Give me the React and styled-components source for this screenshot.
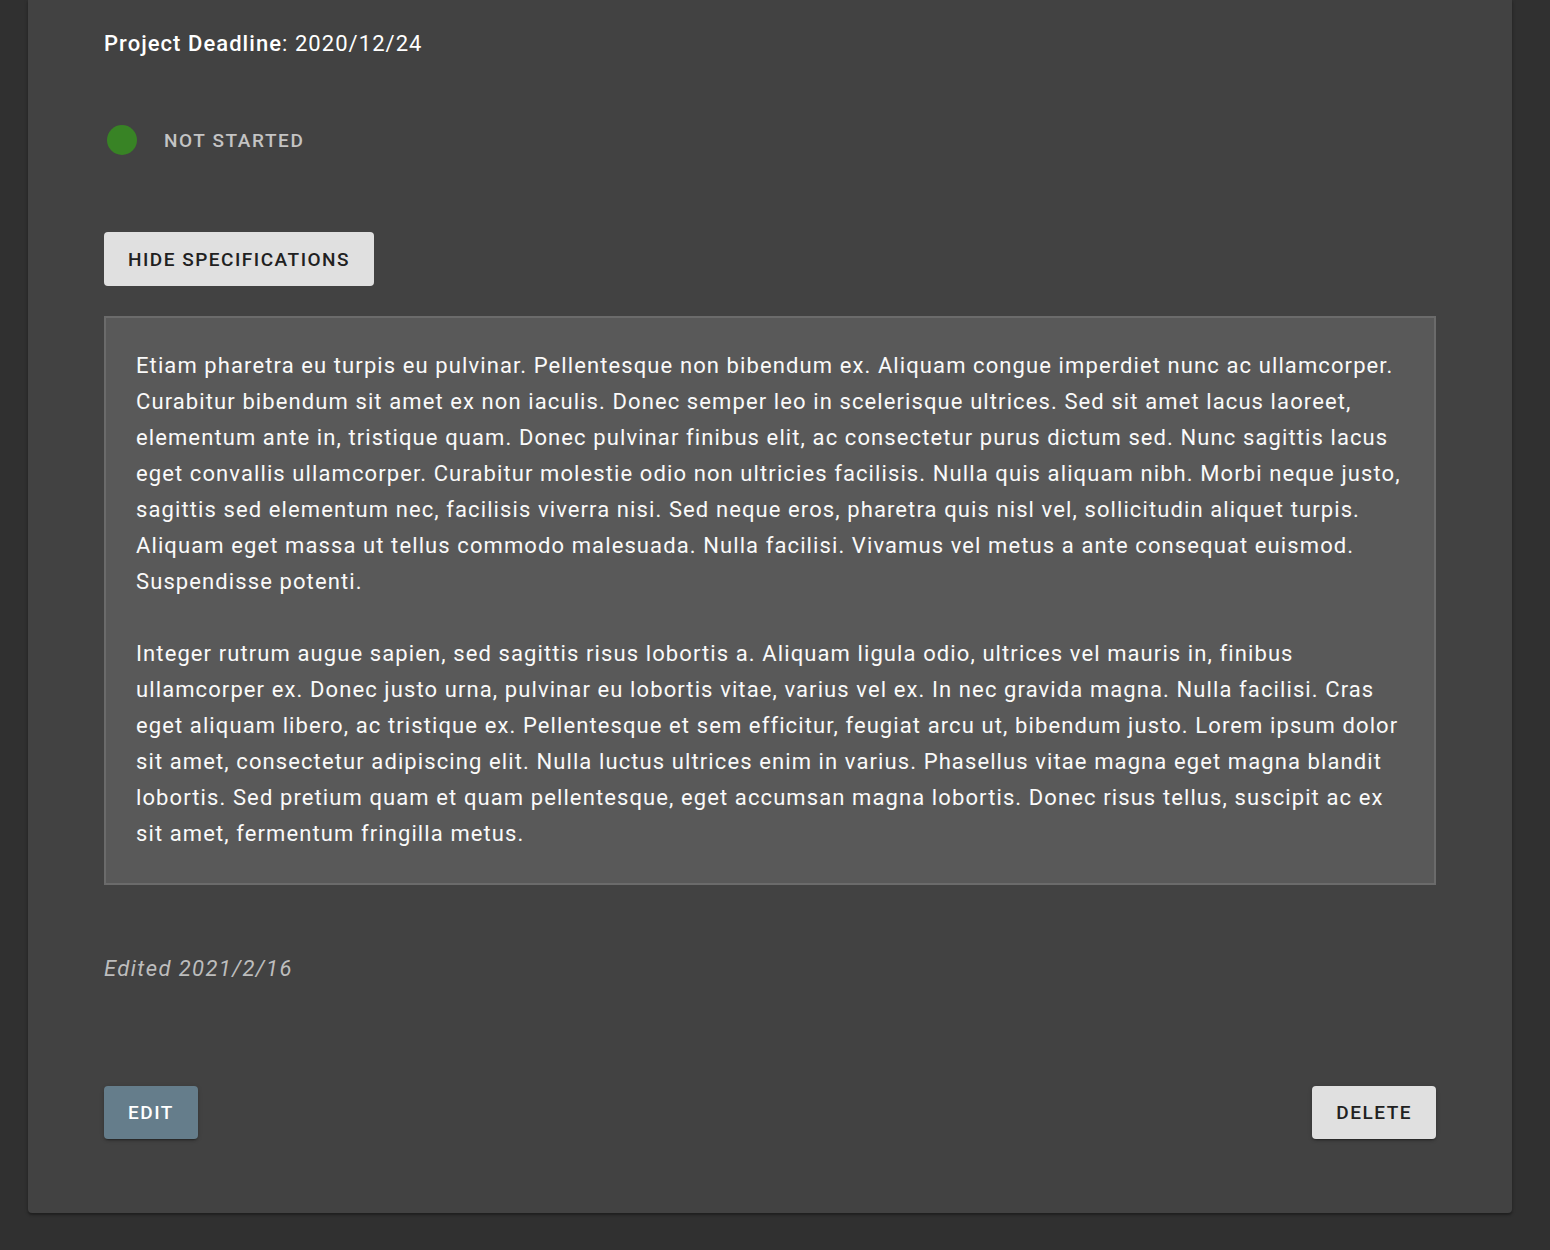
import React from "react";
import styled, { createGlobalStyle } from "styled-components";

const GlobalStyle = createGlobalStyle`
  html, body {
    margin: 0;
    padding: 0;
    background: #303030;
    font-family: Roboto, "Noto Sans", "Liberation Sans", sans-serif;
  }
`;

const Page = styled.div`
  padding: 0 38px 36px 28px;
`;

const Card = styled.div`
  background: #424242;
  border-radius: 0 0 4px 4px;
  box-shadow: 0 2px 2px rgba(0, 0, 0, 0.25), 0 1px 4px rgba(0, 0, 0, 0.2);
  padding: 28px 76px 74px;
  color: #fff;
`;

const Deadline = styled.div`
  font-size: 22px;
  line-height: 32px;
  letter-spacing: 1.05px;

  strong {
    font-weight: 500;
  }
`;

const StatusRow = styled.div`
  display: flex;
  align-items: center;
  gap: 27px;
  margin-top: 65px;
  padding-left: 3px;
`;

const Dot = styled.span`
  width: 30px;
  height: 30px;
  border-radius: 50%;
  background: ${(p) => p.$color};
`;

const StatusLabel = styled.span`
  font-size: 19px;
  font-weight: 500;
  letter-spacing: 1.6px;
  color: #c4c4c4;
  text-transform: uppercase;
`;

const Button = styled.button`
  font-family: inherit;
  font-size: 19px;
  font-weight: 500;
  letter-spacing: 1.5px;
  text-transform: uppercase;
  height: ${(p) => (p.$raised ? "53px" : "54px")};
  padding: 0 24px;
  border: none;
  border-radius: 4px;
  cursor: pointer;
  background: ${(p) => (p.$primary ? "#657d8b" : "#e0e0e0")};
  color: ${(p) => (p.$primary ? "#ffffff" : "#212121")};
  box-shadow: ${(p) =>
    p.$raised
      ? "0 3px 1px -2px rgba(0,0,0,0.2), 0 2px 2px 0 rgba(0,0,0,0.14), 0 1px 5px 0 rgba(0,0,0,0.12)"
      : "none"};
`;

const ToggleRow = styled.div`
  margin-top: 77px;
`;

const Specs = styled.div`
  margin-top: 30px;
  background: #595959;
  border: 2px solid #6b6b6b;
  padding: 30px 30px 31px;
  font-size: 22px;
  line-height: 36px;
  letter-spacing: 1.1px;
  color: #fafafa;

  p {
    margin: 0;
  }

  p + p {
    margin-top: 36px;
  }
`;

const Edited = styled.div`
  margin-top: 68px;
  font-size: 22px;
  line-height: 32px;
  letter-spacing: 1.4px;
  font-style: italic;
  color: #bdbdbd;
`;

const Actions = styled.div`
  display: flex;
  justify-content: space-between;
  align-items: center;
  margin-top: 101px;
`;

const specs = [
  "Etiam pharetra eu turpis eu pulvinar. Pellentesque non bibendum ex. Aliquam congue imperdiet nunc ac ullamcorper. Curabitur bibendum sit amet ex non iaculis. Donec semper leo in scelerisque ultrices. Sed sit amet lacus laoreet, elementum ante in, tristique quam. Donec pulvinar finibus elit, ac consectetur purus dictum sed. Nunc sagittis lacus eget convallis ullamcorper. Curabitur molestie odio non ultricies facilisis. Nulla quis aliquam nibh. Morbi neque justo, sagittis sed elementum nec, facilisis viverra nisi. Sed neque eros, pharetra quis nisl vel, sollicitudin aliquet turpis. Aliquam eget massa ut tellus commodo malesuada. Nulla facilisi. Vivamus vel metus a ante consequat euismod. Suspendisse potenti.",
  "Integer rutrum augue sapien, sed sagittis risus lobortis a. Aliquam ligula odio, ultrices vel mauris in, finibus ullamcorper ex. Donec justo urna, pulvinar eu lobortis vitae, varius vel ex. In nec gravida magna. Nulla facilisi. Cras eget aliquam libero, ac tristique ex. Pellentesque et sem efficitur, feugiat arcu ut, bibendum justo. Lorem ipsum dolor sit amet, consectetur adipiscing elit. Nulla luctus ultrices enim in varius. Phasellus vitae magna eget magna blandit lobortis. Sed pretium quam et quam pellentesque, eget accumsan magna lobortis. Donec risus tellus, suscipit ac ex sit amet, fermentum fringilla metus.",
];

const App = () => {
  return (
    <>
      <GlobalStyle />
      <Page>
        <Card>
          <Deadline>
            <strong>Project Deadline</strong>: 2020/12/24
          </Deadline>
          <StatusRow>
            <Dot $color="#388325" />
            <StatusLabel>Not started</StatusLabel>
          </StatusRow>
          <ToggleRow>
            <Button>Hide specifications</Button>
          </ToggleRow>
          <Specs>
            {specs.map((text, i) => (
              <p key={i}>{text}</p>
            ))}
          </Specs>
          <Edited>Edited 2021/2/16</Edited>
          <Actions>
            <Button $primary $raised>
              Edit
            </Button>
            <Button $raised>Delete</Button>
          </Actions>
        </Card>
      </Page>
    </>
  );
};

export default App;
